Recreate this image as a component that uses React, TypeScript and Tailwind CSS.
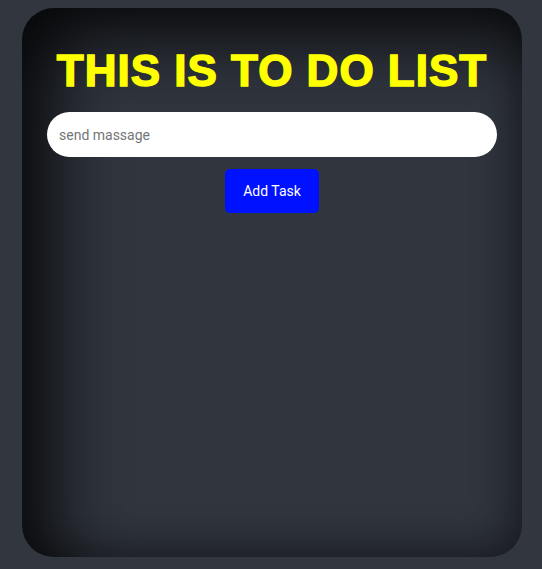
import { useState } from "react";

export default function App() {
  const [task, setTask] = useState("");
  const [tasks, setTasks] = useState<string[]>([]);

  const addTask = () => {
    if (!task.trim()) return;
    setTasks([...tasks, task]);
    setTask("");
  };

  return (
    <div className="min-h-screen bg-[#31363f] pt-2 pl-[22px]">
      <div className="w-[500px] h-[549px] rounded-[32px] bg-[#30353e] shadow-[inset_30px_30px_70px_rgba(0,0,0,0.85),inset_-12px_-12px_30px_rgba(0,0,0,0.25)] px-[25px] pt-[41px] flex flex-col items-center">
        <h1 className="font-['Liberation_Sans',Arial,sans-serif] font-bold text-[44px] leading-none tracking-[1px] text-[#ffff00] [-webkit-text-stroke:1.5px_#ffff00] text-center">
          THIS IS TO DO LIST
        </h1>
        <input
          value={task}
          onChange={(e) => setTask(e.target.value)}
          placeholder="send massage"
          className="mt-[19px] w-full h-[45px] rounded-full bg-white px-3 font-['Roboto',sans-serif] text-sm text-gray-800 placeholder:text-[#757575] outline-none"
        />
        <button
          onClick={addTask}
          className="mt-3 w-[94px] h-[44px] rounded-[5px] bg-[#0011ff] text-white font-['Roboto',sans-serif] text-sm"
        >
          Add Task
        </button>
        <ul className="mt-4 w-full">
          {tasks.map((t, i) => (
            <li key={i} className="text-white font-['Roboto',sans-serif] text-sm py-1">
              {t}
            </li>
          ))}
        </ul>
      </div>
    </div>
  );
}
